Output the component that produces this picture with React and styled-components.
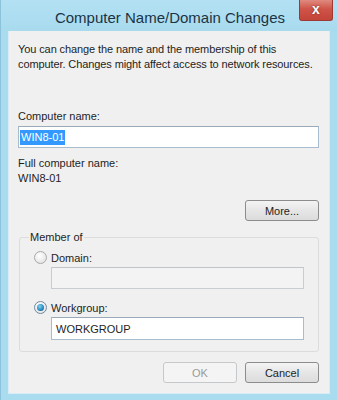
import styled, { createGlobalStyle } from 'styled-components';

const GlobalStyle = createGlobalStyle`
  html, body {
    margin: 0;
    padding: 0;
    background: #ffffff;
  }
  body {
    font-family: "Liberation Sans", Arial, sans-serif;
  }
`;

const Window = styled.div`
  width: 337px;
  height: 400px;
  box-sizing: border-box;
  background: #aadcef;
  border-left: 1px solid #8cc3da;
  display: flex;
  flex-direction: column;
`;

const TitleBar = styled.div`
  position: relative;
  height: 31px;
  flex: none;
  display: flex;
  align-items: center;
  justify-content: center;
  padding-left: 2px;
  background: linear-gradient(#b3e1f3, #a8daee);
`;

const Title = styled.div`
  font-family: "Liberation Sans", Arial, sans-serif;
  font-size: 15px;
  color: #1b3444;
  margin-top: 3px;
`;

const CloseButton = styled.div`
  position: absolute;
  top: 0;
  right: 4px;
  width: 34px;
  height: 21px;
  box-sizing: border-box;
  border: 1px solid #9c3a33;
  border-top: none;
  border-radius: 0 0 3px 3px;
  background: linear-gradient(#e08a80, #cf5448 45%, #c4443a);
  display: flex;
  align-items: center;
  justify-content: center;
  color: #ffffff;
  font-weight: bold;
  font-size: 14px;
  padding-bottom: 2px;
  text-shadow: 0 0 2px #7a2018;
`;

const Body = styled.div`
  flex: 1;
  margin: 0 7px 6px 7px;
  background: #f0f0f0;
  border: 1px solid #d7ecf5;
  border-top: none;
  padding: 11px 10px 0 9px;
  display: flex;
  flex-direction: column;
  font-size: 11px;
  color: #1e1e1e;
`;

const Text = styled.div`
  line-height: 15px;
  white-space: nowrap;
  letter-spacing: ${(p) => (p.$tight ? '-0.1px' : 'normal')};
  margin-top: ${(p) => p.$top || 0}px;
`;

const Field = styled.div`
  height: ${(p) => p.$height || 22}px;
  box-sizing: border-box;
  margin-top: ${(p) => p.$top || 0}px;
  margin-left: ${(p) => p.$left || 0}px;
  border: 1px solid ${(p) => (p.$disabled ? '#c9cdd1' : '#a9bccd')};
  border-top-color: ${(p) => (p.$disabled ? '#c2c6ca' : '#9aaab9')};
  background: ${(p) => (p.$disabled ? '#f3f3f3' : '#ffffff')};
  display: flex;
  align-items: center;
  padding-left: 4px;
  font-size: 11px;
`;

const Selected = styled.span`
  background: #3399ff;
  color: #ffffff;
  line-height: 15px;
  padding: 0 1px;
  margin-left: -3px;
`;

const ButtonRow = styled.div`
  display: flex;
  justify-content: flex-end;
  gap: 8px;
  margin-top: ${(p) => p.$top || 0}px;
`;

const Button = styled.div`
  width: 74px;
  height: 21px;
  box-sizing: border-box;
  border: 1px solid ${(p) => (p.$disabled ? '#c5c9cc' : '#8c8c8c')};
  border-radius: 3px;
  background: ${(p) =>
    p.$disabled ? '#f4f4f4' : 'linear-gradient(#f4f4f4, #e6e6e6 50%, #dcdcdc)'};
  color: ${(p) => (p.$disabled ? '#9a9a9a' : '#1e1e1e')};
  display: flex;
  align-items: center;
  justify-content: center;
  font-size: 11px;
`;

const Group = styled.fieldset`
  margin: 9px 0 0 1px;
  padding: 1px 14px 11px 14px;
  border: 1px solid #dcdcdc;
  border-radius: 3px;
  min-width: 0;
`;

const Legend = styled.legend`
  padding: 0 1px;
  margin-left: -5px;
  line-height: 15px;
  font-size: 11px;
`;

const RadioRow = styled.div`
  display: flex;
  align-items: center;
  gap: 4px;
  height: 15px;
  margin-top: ${(p) => p.$top || 0}px;
`;

const Radio = styled.span`
  width: 13px;
  height: 13px;
  box-sizing: border-box;
  border-radius: 50%;
  border: 1px solid ${(p) => (p.$checked ? '#6f8aa3' : '#a9a9a9')};
  background: radial-gradient(circle at 40% 35%, #ffffff, #dcdcdc);
  display: flex;
  align-items: center;
  justify-content: center;

  &::after {
    content: '';
    display: ${(p) => (p.$checked ? 'block' : 'none')};
    width: 7px;
    height: 7px;
    border-radius: 50%;
    background: radial-gradient(circle at 40% 35%, #7fd3f2, #1b78b0 70%, #0f4f7a);
  }
`;

export default function App() {
  return (
    <>
      <GlobalStyle />
      <Window>
        <TitleBar>
          <Title>Computer Name/Domain Changes</Title>
          <CloseButton>x</CloseButton>
        </TitleBar>
        <Body>
          <Text $tight>
            You can change the name and the membership of this
            <br />
            computer. Changes might affect access to network resources.
          </Text>
          <Text $top={37}>Computer name:</Text>
          <Field $top={2}>
            <Selected>WIN8-01</Selected>
          </Field>
          <Text $top={8}>Full computer name:</Text>
          <Text>WIN8-01</Text>
          <ButtonRow $top={14}>
            <Button>More...</Button>
          </ButtonRow>
          <Group>
            <Legend>Member of</Legend>
            <RadioRow $top={4}>
              <Radio />
              Domain:
            </RadioRow>
            <Field $top={2} $left={17} $disabled />
            <RadioRow $top={11}>
              <Radio $checked />
              Workgroup:
            </RadioRow>
            <Field $top={2} $left={17} $height={23}>
              WORKGROUP
            </Field>
          </Group>
          <ButtonRow $top={10}>
            <Button $disabled>OK</Button>
            <Button>Cancel</Button>
          </ButtonRow>
        </Body>
      </Window>
    </>
  );
}
